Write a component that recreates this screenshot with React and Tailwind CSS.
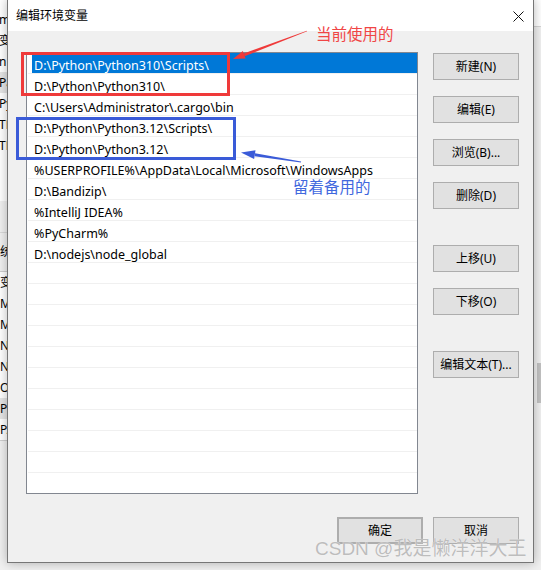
import React from "react";

const paths = [
  "D:\\Python\\Python310\\Scripts\\",
  "D:\\Python\\Python310\\",
  "C:\\Users\\Administrator\\.cargo\\bin",
  "D:\\Python\\Python3.12\\Scripts\\",
  "D:\\Python\\Python3.12\\",
  "%USERPROFILE%\\AppData\\Local\\Microsoft\\WindowsApps",
  "D:\\Bandizip\\",
  "%IntelliJ IDEA%",
  "%PyCharm%",
  "D:\\nodejs\\node_global",
];

const rows = [...paths, ...Array(12).fill("")];

/* fragments of the window behind the dialog */
const leftTop = [
  { t: "m", h: "h-[30px]", bg: "bg-white", pt: "pt-[9px]" },
  { t: "变", h: "h-[21px]", bg: "bg-white" },
  { t: "n", h: "h-[21px]", bg: "bg-white" },
  { t: "Pa", h: "h-[21px]", bg: "bg-[#e5e5e5]" },
  { t: "Py", h: "h-[21px]", bg: "bg-white" },
  { t: "TE", h: "h-[21px]", bg: "bg-white" },
  { t: "TM", h: "h-[21px]", bg: "bg-white" },
];

const leftBottom = ["变", "M", "M", "N", "N", "O", "Pa", "PA"];

function Btn({ children, className = "" }) {
  return (
    <button
      type="button"
      className={`w-[86px] h-[27px] bg-[#e1e1e1] border border-[#adadad] text-[12px] text-black flex items-center justify-center ${className}`}
    >
      {children}
    </button>
  );
}

export default function App() {
  return (
    <div className="relative w-[541px] h-[570px] overflow-hidden bg-[#f0f0f0] font-['Noto_Sans','Noto_Sans_CJK_SC',sans-serif] text-black">
      {/* behind window */}
      <div className="flex justify-between w-full h-full">
        <div className="w-[40px] flex flex-col text-[12px] leading-none">
          {leftTop.map((r, i) => (
            <div key={i} className={`${r.h} ${r.bg} ${r.pt || ""} flex items-center -ml-[1px]`}>
              {r.t}
            </div>
          ))}
          <div className="h-[45px] bg-white" />
          <div className="h-[32px] bg-[#f0f0f0] border-b border-[#d9d9d9]" />
          <div className="h-[38px] bg-[#f0f0f0] flex items-center">统</div>
          <div className="bg-white border-t border-b border-[#cfcfcf] flex flex-col">
            {leftBottom.map((t, i) => (
              <div key={i} className={`h-[21px] flex items-center ${t === "Pa" ? "bg-[#e5e5e5]" : ""}`}>
                {t}
              </div>
            ))}
          </div>
        </div>
        <div className="w-[20px] flex flex-col">
          <div className="h-[27px] bg-white border-b border-[#d4d4d4]" />
          <div className="flex-1 flex justify-end">
            <div className="w-[4px] mt-[336px] h-[40px] bg-[#c2c2c2]" />
          </div>
        </div>
      </div>

      {/* dialog */}
      <div className="absolute left-[7px] top-[-1px] w-[527px] h-[564px] border border-[#767676] bg-[#f0f0f0] shadow-[0_0_10px_rgba(0,0,0,0.28)] flex flex-col">
        <div className="h-[31px] bg-white flex items-center justify-between pl-[8px] pr-[9px] pt-[1px]">
          <span className="text-[12px]">编辑环境变量</span>
          <svg width="11" height="11" viewBox="0 0 11 11">
            <path d="M0.5 0.5 L10.5 10.5 M10.5 0.5 L0.5 10.5" stroke="#111" strokeWidth="1" />
          </svg>
        </div>

        <div className="pl-[18px] pt-[21px] flex flex-col">
          <div className="flex gap-[15px]">
            <div className="w-[392px] h-[442px] border border-[#828790] bg-white overflow-hidden">
              {rows.map((p, i) => (
                <div key={i} className="h-[21px] border-b border-[#f0f0f0] ml-px flex">
                  <div
                    className={
                      i === 0
                        ? "flex-1 ml-[4px] pl-[2px] pt-[4px] bg-[#0078d7] text-white text-[12.5px] leading-[15px] flex items-center whitespace-nowrap"
                        : "flex-1 pl-[6px] pt-[4px] text-[12.5px] leading-[15px] flex items-center whitespace-nowrap"
                    }
                  >
                    {p}
                  </div>
                </div>
              ))}
            </div>

            <div className="w-[86px] flex flex-col pt-px">
              <Btn>新建(N)</Btn>
              <Btn className="mt-[16px]">编辑(E)</Btn>
              <Btn className="mt-[16px]">浏览(B)...</Btn>
              <Btn className="mt-[16px]">删除(D)</Btn>
              <Btn className="mt-[36px]">上移(U)</Btn>
              <Btn className="mt-[16px]">下移(O)</Btn>
              <Btn className="mt-[36px]">编辑文本(T)...</Btn>
            </div>
          </div>

          <div className="w-[493px] flex justify-end gap-[10px] mt-[23px]">
            <Btn className="border-2 border-[#0078d7]">确定</Btn>
            <Btn>取消</Btn>
          </div>
        </div>
      </div>

      {/* annotations */}
      <svg className="absolute inset-0 pointer-events-none" width="541" height="570" viewBox="0 0 541 570">
        <rect x="22.5" y="53.5" width="206" height="41" fill="none" stroke="#ef3a3a" strokeWidth="3" />
        <polygon points="244.7,56.2 243.7,53.4 306.9,30.7 307.1,31.3" fill="#ef3a3a" />
        <polygon points="233,59 245.6,58.5 242.8,51.1" fill="#ef3a3a" />

        <rect x="17.5" y="118.5" width="217" height="40" fill="none" stroke="#3a5bd8" strokeWidth="3" />
        <polygon points="254.6,156.2 255,153.2 301.1,161.6 300.9,162.4" fill="#3a5bd8" />
        <polygon points="241,152.5 254.1,159.1 255.5,150.3" fill="#3a5bd8" />
      </svg>
      <div className="absolute left-[316px] top-[25px] text-[15.5px] leading-[16px] text-[#f04545] font-['Noto_Sans_CJK_SC',sans-serif]">
        当前使用的
      </div>
      <div className="absolute left-[293px] top-[178px] text-[15.5px] leading-[16px] text-[#4168de] font-['Noto_Sans_CJK_SC',sans-serif]">
        留着备用的
      </div>

      {/* watermark */}
      <div className="absolute left-[315px] top-[537px] text-[19px] leading-[24px] text-[#bdbdbd] whitespace-nowrap font-['Liberation_Sans','Noto_Sans_CJK_SC',sans-serif] [text-shadow:0_0_1px_#ffffff]">
        CSDN @我是懒洋洋大王
      </div>
    </div>
  );
}
